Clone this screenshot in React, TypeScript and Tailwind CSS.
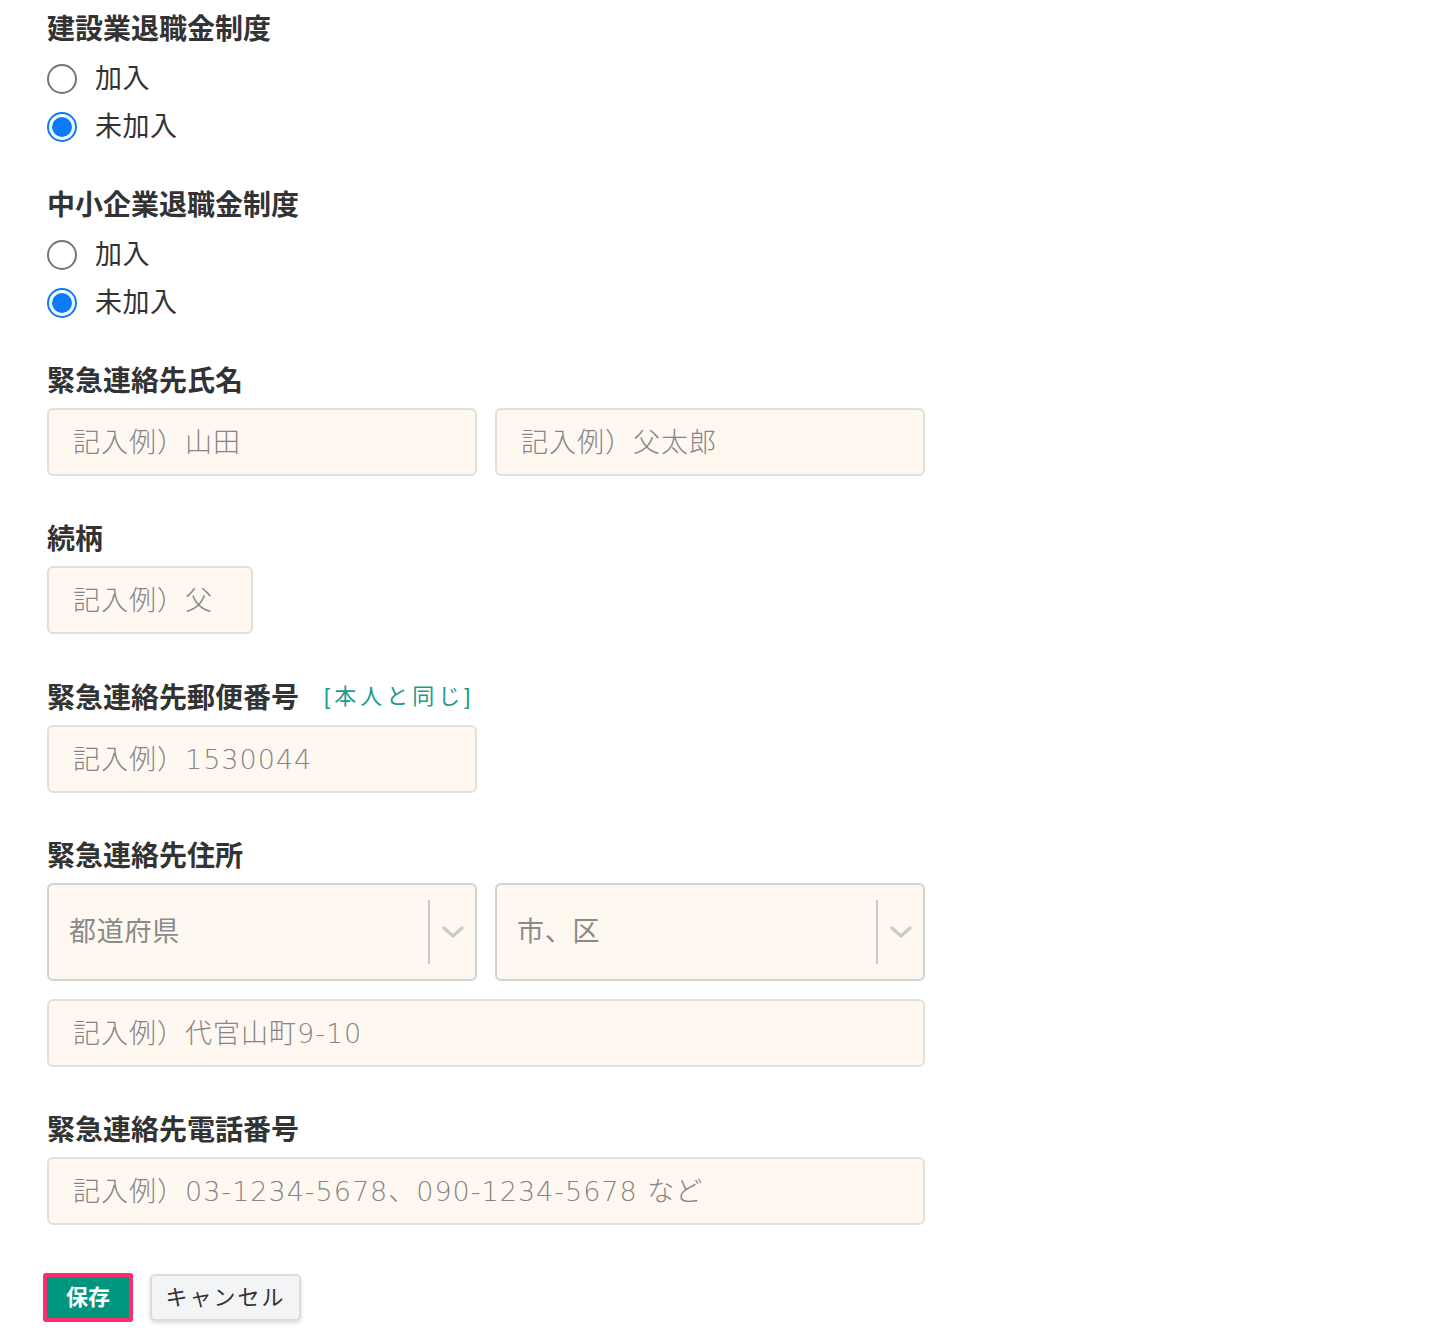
import React from 'react'

const font = { fontFamily: '"Liberation Sans", "Noto Sans CJK JP", sans-serif' }
const phFont = { fontFamily: '"DejaVu Sans", "Noto Sans CJK JP", sans-serif' }

function Heading({ children, className = '' }: { children: React.ReactNode; className?: string }) {
  return <div className={`text-[28px] leading-[32px] pt-[4px] font-bold text-[#333] ${className}`}>{children}</div>
}

function Radio({ label, checked }: { label: string; checked?: boolean }) {
  return (
    <label className="flex items-center h-[48px] gap-[18px]">
      {checked ? (
        <span className="w-[30px] h-[30px] rounded-full border-2 border-[#0a7aff] flex items-center justify-center">
          <span className="w-[20px] h-[20px] rounded-full bg-[#0a7aff]" />
        </span>
      ) : (
        <span className="w-[30px] h-[30px] rounded-full border-2 border-[#767676]" />
      )}
      <span className="text-[27px] tracking-[0.5px] text-[#333]">{label}</span>
    </label>
  )
}

function Input({ ph, className = '' }: { ph: string; className?: string }) {
  return (
    <input
      placeholder={ph}
      style={phFont}
      className={`h-[68px] rounded-[6px] border-2 border-[#e0e0e0] bg-[#fff8f1] px-[24px] text-[27px] tracking-[1px] font-light text-[#333] placeholder:text-[#858585] outline-none ${className}`}
    />
  )
}

function Select({ ph }: { ph: string }) {
  return (
    <div className="w-[430px] h-[98px] rounded-[6px] border-2 border-[#d2d2d2] bg-[#fff8f1] flex items-center">
      <span className="flex-1 pl-[20px] text-[27px] tracking-[0.75px] text-[#8a8a8a]">{ph}</span>
      <span className="w-[2px] h-[64px] bg-[#cccccc]" />
      <span className="w-[45px] flex justify-center">
        <svg width="24" height="14" viewBox="0 0 24 14" fill="none">
          <path d="M3 3l9 8 9-8" stroke="#cccccc" strokeWidth="3.5" strokeLinecap="round" strokeLinejoin="round" />
        </svg>
      </span>
    </div>
  )
}

export default function App() {
  return (
    <div style={font} className="bg-white min-h-[1332px] pl-[47px] pt-[10px] text-[#333]">
      <Heading>建設業退職金制度</Heading>
      <div className="mt-[9px]">
        <Radio label="加入" />
        <Radio label="未加入" checked />
      </div>

      <Heading className="mt-[35px]">中小企業退職金制度</Heading>
      <div className="mt-[9px]">
        <Radio label="加入" />
        <Radio label="未加入" checked />
      </div>

      <Heading className="mt-[35px]">緊急連絡先氏名</Heading>
      <div className="mt-[10px] flex gap-[18px]">
        <Input ph="記入例）山田" className="w-[430px]" />
        <Input ph="記入例）父太郎" className="w-[430px]" />
      </div>

      <Heading className="mt-[44px]">続柄</Heading>
      <div className="mt-[10px]">
        <Input ph="記入例）父" className="w-[206px]" />
      </div>

      <div className="mt-[44px] h-[37px] flex items-center gap-[25px]">
        <Heading>緊急連絡先郵便番号</Heading>
        <span className="text-[22px] text-[#1c9c8c] tracking-[4px]">[本人と同じ]</span>
      </div>
      <div className="mt-[10px]">
        <Input ph="記入例）1530044" className="w-[430px]" />
      </div>

      <Heading className="mt-[44px]">緊急連絡先住所</Heading>
      <div className="mt-[10px] flex gap-[18px]">
        <Select ph="都道府県" />
        <Select ph="市、区" />
      </div>
      <div className="mt-[18px]">
        <Input ph="記入例）代官山町9-10" className="w-[878px]" />
      </div>

      <Heading className="mt-[44px]">緊急連絡先電話番号</Heading>
      <div className="mt-[10px]">
        <Input ph="記入例）03-1234-5678、090-1234-5678 など" className="w-[878px]" />
      </div>

      <div className="mt-[48px] -ml-[4px] flex items-center gap-[17px]">
        <button className="w-[90px] h-[49px] rounded-[3px] border-[4px] border-[#fb2f6e] bg-[#00957f] text-white text-[22px] font-bold">
          保存
        </button>
        <button className="w-[151px] h-[47px] rounded-[5px] border-2 border-[#dcdcdc] bg-[#f3f4f6] text-[22px] text-[#333] tracking-[2px] shadow-[0_2px_4px_rgba(0,0,0,0.15)]">
          キャンセル
        </button>
      </div>
    </div>
  )
}
